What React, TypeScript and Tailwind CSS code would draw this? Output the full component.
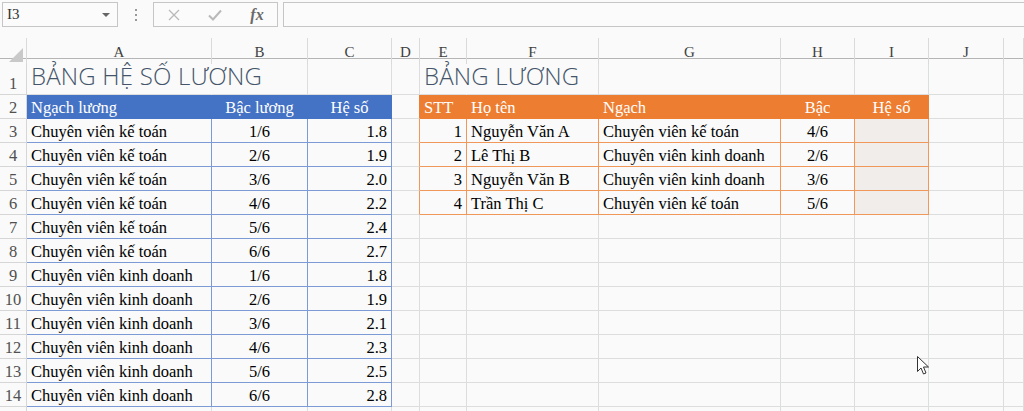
import React from 'react';

const COLS = ['', 'A', 'B', 'C', 'D', 'E', 'F', 'G', 'H', 'I', 'J', ''];

const blueRows: [string, string, string][] = [
  ['Chuyên viên kế toán', '1/6', '1.8'],
  ['Chuyên viên kế toán', '2/6', '1.9'],
  ['Chuyên viên kế toán', '3/6', '2.0'],
  ['Chuyên viên kế toán', '4/6', '2.2'],
  ['Chuyên viên kế toán', '5/6', '2.4'],
  ['Chuyên viên kế toán', '6/6', '2.7'],
  ['Chuyên viên kinh doanh', '1/6', '1.8'],
  ['Chuyên viên kinh doanh', '2/6', '1.9'],
  ['Chuyên viên kinh doanh', '3/6', '2.1'],
  ['Chuyên viên kinh doanh', '4/6', '2.3'],
  ['Chuyên viên kinh doanh', '5/6', '2.5'],
  ['Chuyên viên kinh doanh', '6/6', '2.8'],
];

const staff: [string, string, string, string][] = [
  ['1', 'Nguyễn Văn A', 'Chuyên viên kế toán', '4/6'],
  ['2', 'Lê Thị B', 'Chuyên viên kinh doanh', '2/6'],
  ['3', 'Nguyễn Văn B', 'Chuyên viên kinh doanh', '3/6'],
  ['4', 'Trần Thị C', 'Chuyên viên kế toán', '5/6'],
];

const GRID = 'grid grid-cols-[27px_185px_96px_84px_28px_47px_132px_182px_74px_74px_75px_20px]';
const CELL = 'flex items-end whitespace-nowrap border-r border-b px-[4px] pb-[1px] leading-[18px]';
const GRIDLINE = 'border-[#dcdddd]';
const BLUE = 'border-[#7c9bd6]';
const ORANGE = 'border-[#f0985a]';

const RowHead = ({ n }: { n?: number }) => (
  <div className="flex items-end justify-center border-r border-b border-[#d6d6d6] pb-[1px] leading-[18px] text-[#505050]">
    {n}
  </div>
);

export default function App() {
  return (
    <div className="relative h-[411px] w-[1024px] overflow-hidden bg-[#f9faf9] font-['Liberation_Serif','Times_New_Roman',serif] text-[16.5px] text-black">
      {/* formula bar */}
      <div className="flex h-[38px] items-start pl-[2px] pt-[2px]">
        <div className="flex h-[25px] w-[116px] items-center border border-[#c6c6c6] bg-[#fbfbfb] pl-[4px] text-[15px] text-[#333]">
          <span>I3</span>
          <svg className="ml-auto mr-[7px]" width="8" height="4" viewBox="0 0 8 4">
            <polygon points="0,0 8,0 4,4" fill="#666" />
          </svg>
        </div>
        <div className="flex h-[25px] w-[35px] flex-col items-center justify-center gap-[3px]">
          <span className="h-[2px] w-[2px] bg-[#999]" />
          <span className="h-[2px] w-[2px] bg-[#999]" />
          <span className="h-[2px] w-[2px] bg-[#999]" />
        </div>
        <div className="flex h-[25px] w-[125px] items-center border border-[#c6c6c6] bg-[#fbfbfb]">
          <div className="flex w-[42px] justify-center">
            <svg width="12" height="12" viewBox="0 0 12 12">
              <path d="M1 1 L11 11 M11 1 L1 11" stroke="#b9b9b9" strokeWidth="1.3" />
            </svg>
          </div>
          <div className="flex w-[42px] justify-center">
            <svg width="14" height="12" viewBox="0 0 14 12">
              <path d="M1 6.5 L5 10.5 L13 1.5" stroke="#b9b9b9" strokeWidth="2" fill="none" />
            </svg>
          </div>
          <div className="flex w-[42px] justify-center pl-[1px] text-[16px] font-semibold italic text-[#6a6a6a]">fx</div>
        </div>
        <div className="ml-[5px] h-[25px] flex-1 border border-r-0 border-[#c6c6c6] bg-[#fbfbfb]" />
      </div>

      {/* column headers */}
      <div className={`${GRID} h-[21px] border-b border-[#b5b5b5]`}>
        {COLS.map((c, i) => (
          <div
            key={i}
            className="relative flex items-center justify-center border-r border-[#dadada] pt-[3px] text-[15px] text-[#404040]"
          >
            {i === 0 ? (
              <svg className="absolute bottom-[2px] right-[3px]" width="14" height="14" viewBox="0 0 14 14">
                <polygon points="14,0 14,14 0,14" fill="#c9c9c9" />
              </svg>
            ) : (
              c
            )}
          </div>
        ))}
      </div>

      {/* row 1: titles */}
      <div className={`${GRID} h-[36px]`}>
        <RowHead n={1} />
        <div className={`${CELL} ${GRIDLINE} border-r-transparent pb-[3px] font-['Open_Sans',sans-serif] text-[24px] font-light leading-[30px] tracking-[0.2px] text-[#44546a]`}>
          BẢNG HỆ SỐ LƯƠNG
        </div>
        <div className={`${CELL} ${GRIDLINE}`} />
        <div className={`${CELL} ${GRIDLINE}`} />
        <div className={`${CELL} ${GRIDLINE}`} />
        <div className={`${CELL} ${GRIDLINE} border-r-transparent pb-[3px] font-['Open_Sans',sans-serif] text-[24px] font-light leading-[30px] tracking-[0.2px] text-[#44546a]`}>
          BẢNG LƯƠNG
        </div>
        <div className={`${CELL} ${GRIDLINE}`} />
        <div className={`${CELL} ${GRIDLINE}`} />
        <div className={`${CELL} ${GRIDLINE}`} />
        <div className={`${CELL} ${GRIDLINE}`} />
        <div className={`${CELL} ${GRIDLINE}`} />
        <div className={`${CELL} ${GRIDLINE}`} />
      </div>

      {/* row 2: table headers */}
      <div className={`${GRID} h-[24px]`}>
        <RowHead n={2} />
        <div className={`${CELL} border-[#4472c4] bg-[#4472c4] text-white`}>Ngạch lương</div>
        <div className={`${CELL} justify-center border-[#4472c4] bg-[#4472c4] text-white`}>Bậc lương</div>
        <div className={`${CELL} justify-center border-[#4472c4] bg-[#4472c4] text-white`}>Hệ số</div>
        <div className={`${CELL} ${GRIDLINE} border-r-[#ed7d31]`} />
        <div className={`${CELL} border-[#ed7d31] bg-[#ed7d31] px-[3px] text-white`}>STT</div>
        <div className={`${CELL} border-[#ed7d31] bg-[#ed7d31] text-white`}>Họ tên</div>
        <div className={`${CELL} border-[#ed7d31] bg-[#ed7d31] text-white`}>Ngạch</div>
        <div className={`${CELL} justify-center border-[#ed7d31] bg-[#ed7d31] text-white`}>Bậc</div>
        <div className={`${CELL} justify-center border-[#ed7d31] bg-[#ed7d31] text-white`}>Hệ số</div>
        <div className={`${CELL} ${GRIDLINE}`} />
        <div className={`${CELL} ${GRIDLINE}`} />
      </div>

      {/* rows 3-14 */}
      {blueRows.map(([ngach, bac, heso], i) => {
        const s = staff[i];
        return (
          <div key={i} className={`${GRID} h-[24px]`}>
            <RowHead n={i + 3} />
            <div className={`${CELL} ${BLUE}`}>{ngach}</div>
            <div className={`${CELL} ${BLUE} justify-center`}>{bac}</div>
            <div className={`${CELL} ${BLUE} justify-end`}>{heso}</div>
            {s ? (
              <>
                <div className={`${CELL} ${GRIDLINE} border-r-[#f0985a]`} />
                <div className={`${CELL} ${ORANGE} justify-end px-[3px]`}>{s[0]}</div>
                <div className={`${CELL} ${ORANGE} px-[3px]`}>{s[1]}</div>
                <div className={`${CELL} ${ORANGE}`}>{s[2]}</div>
                <div className={`${CELL} ${ORANGE} justify-center`}>{s[3]}</div>
                <div className={`${CELL} ${ORANGE} bg-[#f1edea]`} />
              </>
            ) : (
              <>
                <div className={`${CELL} ${GRIDLINE}`} />
                <div className={`${CELL} ${GRIDLINE}`} />
                <div className={`${CELL} ${GRIDLINE}`} />
                <div className={`${CELL} ${GRIDLINE}`} />
                <div className={`${CELL} ${GRIDLINE}`} />
                <div className={`${CELL} ${GRIDLINE}`} />
              </>
            )}
            <div className={`${CELL} ${GRIDLINE}`} />
            <div className={`${CELL} ${GRIDLINE}`} />
          </div>
        );
      })}

      {/* row 15, only its top edge is on screen */}
      <div className={`${GRID} h-[24px]`}>
        <RowHead />
        {COLS.slice(1).map((_, i) => (
          <div key={i} className={`${CELL} ${GRIDLINE}`} />
        ))}
      </div>

      {/* mouse pointer */}
      <svg className="absolute left-[917px] top-[356px]" width="13" height="20" viewBox="0 0 13 20">
        <path
          d="M0.5 0.5 L0.5 15.5 L4 12 L6.5 18 L9 17 L6.5 11 L11.5 11 Z"
          fill="#fff"
          stroke="#333"
          strokeWidth="1"
          strokeLinejoin="round"
        />
      </svg>
    </div>
  );
}
